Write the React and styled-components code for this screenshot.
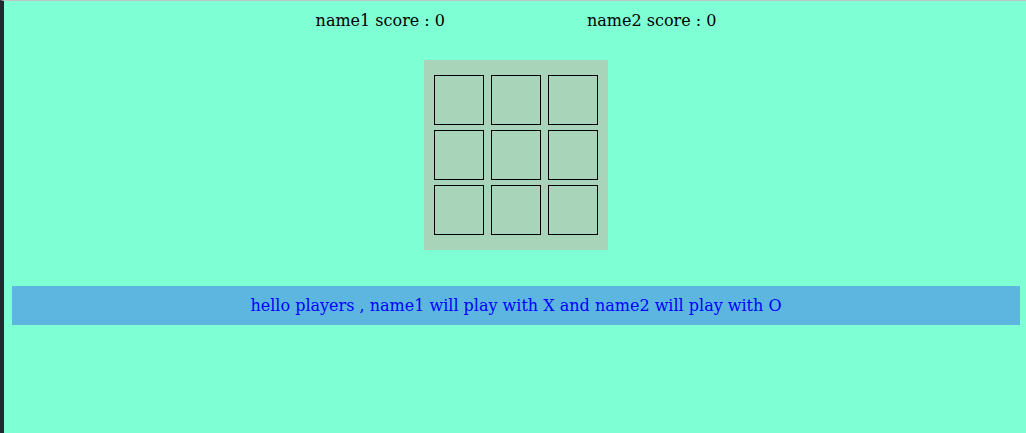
import React, { useState } from "react";
import styled, { createGlobalStyle } from "styled-components";

const GlobalStyle = createGlobalStyle`
  html, body {
    margin: 0;
    padding: 0;
    background: #7fffd4;
  }
  body {
    font-family: "DejaVu Serif", "Liberation Serif", serif;
    font-size: 16px;
  }
`;

function App() {
  const [cells, setCells] = useState(Array(9).fill(""));
  const [turn, setTurn] = useState("X");
  const scores = { name1: 0, name2: 0 };

  const play = (i) => {
    if (cells[i]) return;
    const next = [...cells];
    next[i] = turn;
    setCells(next);
    setTurn(turn === "X" ? "O" : "X");
  };

  return (
    <>
      <GlobalStyle />
      <Page>
        <Scores>
          <Score>name1 score : {scores.name1}</Score>
          <Score>name2 score : {scores.name2}</Score>
        </Scores>
        <Board>
          {cells.map((c, i) => (
            <Cell key={i} onClick={() => play(i)}>
              {c}
            </Cell>
          ))}
        </Board>
        <Message>
          hello players , name1 will play with X and name2 will play with O
        </Message>
      </Page>
    </>
  );
}

const Page = styled.div`
  min-height: 100vh;
  box-sizing: border-box;
  border-top: 1px solid #c3c3c3;
  border-left: 4px solid #232830;
  display: flex;
  flex-direction: column;
  align-items: center;
  padding: 0 6px 0 8px;
`;

const Scores = styled.div`
  display: flex;
  gap: 142px;
  margin-top: 10px;
  line-height: 19px;
  color: #000;
`;

const Score = styled.span``;

const Board = styled.div`
  margin-top: 30px;
  background: #a8d5b9;
  padding: 15px 10px;
  display: grid;
  grid-template-columns: repeat(3, 50px);
  grid-auto-rows: 50px;
  column-gap: 7px;
  row-gap: 5px;
`;

const Cell = styled.div`
  box-sizing: border-box;
  border: 1px solid #000;
  display: flex;
  align-items: center;
  justify-content: center;
  font-size: 28px;
  cursor: pointer;
`;

const Message = styled.div`
  align-self: stretch;
  margin-top: 36px;
  height: 39px;
  line-height: 39px;
  background: #5db6e0;
  color: #0000ff;
  text-align: center;
`;

export default App;
